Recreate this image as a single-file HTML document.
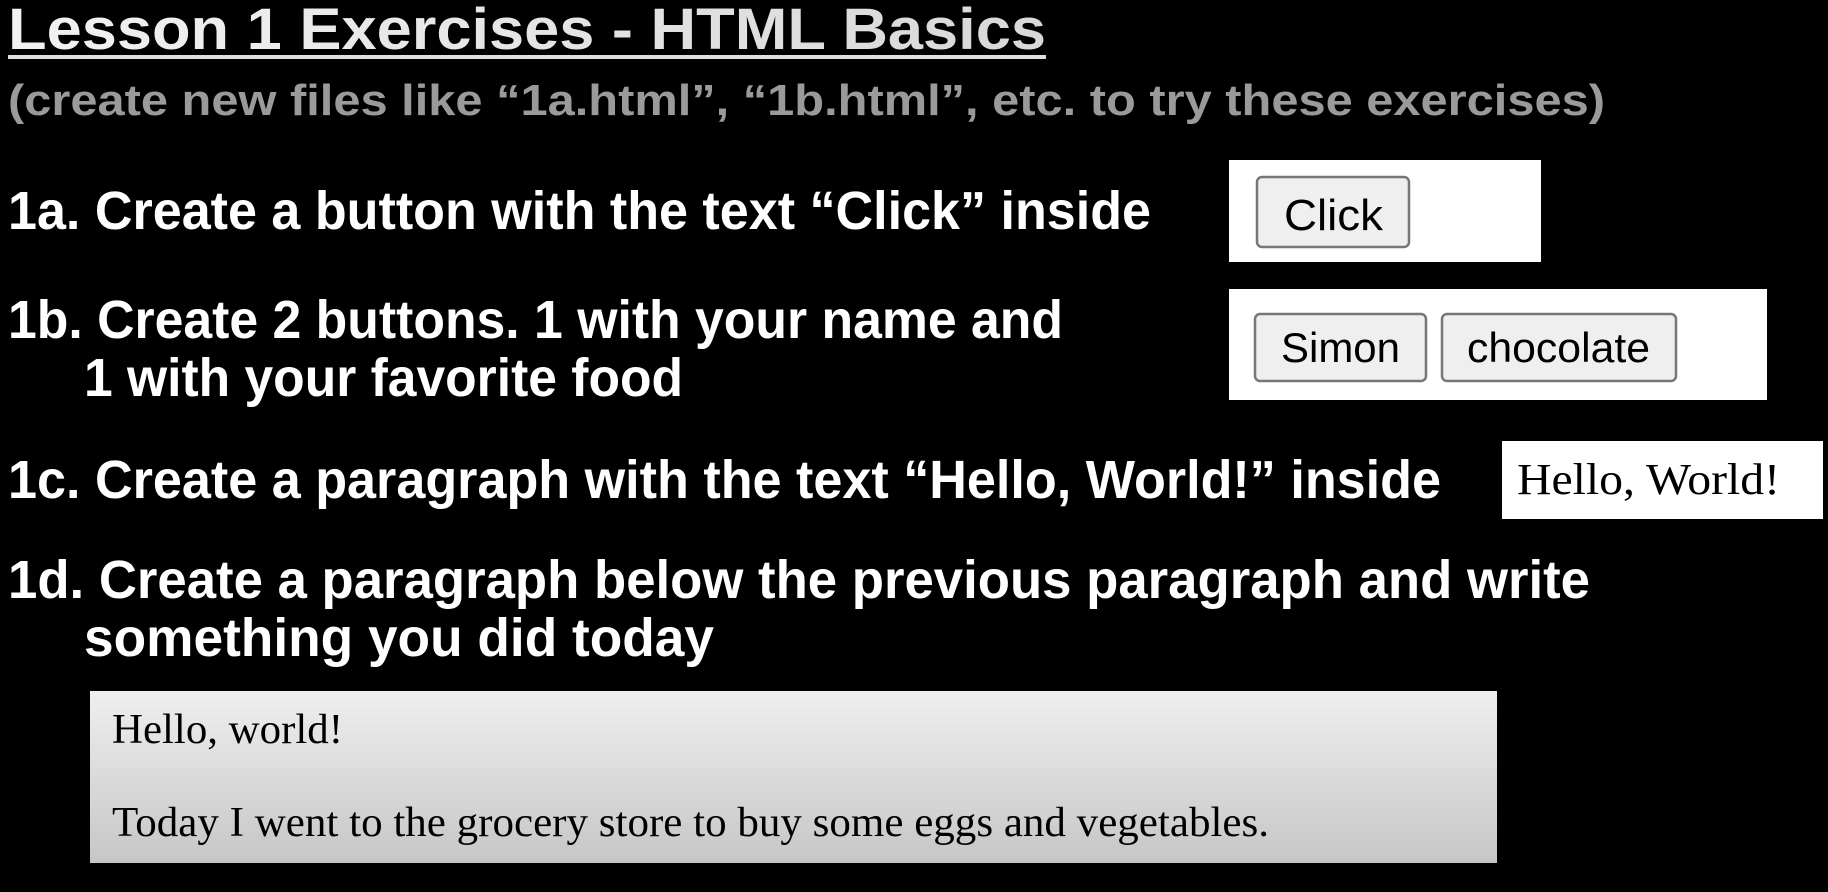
<!DOCTYPE html>
<html><head><meta charset="utf-8"><style>
html,body{margin:0;padding:0;background:#000;width:1828px;height:892px;overflow:hidden}
svg{display:block}
.m{font-family:"Liberation Sans",sans-serif;font-weight:bold;fill:#fff}
.s{font-family:"Liberation Serif",serif;fill:#000}
.b{font-family:"Liberation Sans",sans-serif;fill:#000}
</style></head><body>
<svg width="1828" height="892" viewBox="0 0 1828 892" xmlns="http://www.w3.org/2000/svg">
<defs><linearGradient id="g" x1="0" y1="0" x2="0" y2="1"><stop offset="0" stop-color="#efefef"/><stop offset="1" stop-color="#c6c6c6"/></linearGradient>
<linearGradient id="t" x1="0" y1="0" x2="1" y2="0"><stop offset="0" stop-color="#f2f2f2"/><stop offset="1" stop-color="#d8d8d8"/></linearGradient></defs>
<rect width="1828" height="892" fill="#000"/>
<text class="m" x="8" y="49" font-size="58" textLength="1038" lengthAdjust="spacingAndGlyphs" style="fill:url(#t)">Lesson 1  Exercises - HTML Basics</text>
<rect x="8" y="55" width="1038" height="4" fill="#e0e0e0"/>
<text class="m" x="8" y="115" font-size="44" textLength="1597" lengthAdjust="spacingAndGlyphs" style="fill:#9a9a9a">(create new files like “1a.html”, “1b.html”, etc. to try these exercises)</text>

<text class="m" x="8" y="229" font-size="54" textLength="1143" lengthAdjust="spacingAndGlyphs">1a. Create a button with the text “Click” inside</text>
<rect x="1229" y="160" width="312" height="102" fill="#fff"/>
<rect x="1257" y="177" width="152" height="70" rx="5" fill="#efefef" stroke="#777" stroke-width="2.5"/>
<text class="b" x="1284" y="230" font-size="44" textLength="99" lengthAdjust="spacingAndGlyphs">Click</text>

<text class="m" x="8" y="338" font-size="54" textLength="1055" lengthAdjust="spacingAndGlyphs">1b. Create 2 buttons. 1 with your name and</text>
<text class="m" x="84" y="396" font-size="54" textLength="599" lengthAdjust="spacingAndGlyphs">1 with your favorite food</text>
<rect x="1229" y="289" width="538" height="111" fill="#fff"/>
<rect x="1255" y="314" width="171" height="67" rx="5" fill="#efefef" stroke="#777" stroke-width="2.5"/>
<rect x="1442" y="314" width="234" height="67" rx="5" fill="#efefef" stroke="#777" stroke-width="2.5"/>
<text class="b" x="1281" y="362" font-size="42" textLength="119" lengthAdjust="spacingAndGlyphs">Simon</text>
<text class="b" x="1467" y="362" font-size="42" textLength="183" lengthAdjust="spacingAndGlyphs">chocolate</text>

<text class="m" x="8" y="498" font-size="54" textLength="1433" lengthAdjust="spacingAndGlyphs">1c. Create a paragraph with the text “Hello, World!” inside</text>
<rect x="1502" y="441" width="321" height="78" fill="#fff"/>
<text class="s" x="1517" y="494" font-size="44" textLength="263" lengthAdjust="spacingAndGlyphs">Hello, World!</text>

<text class="m" x="8" y="598" font-size="54" textLength="1582" lengthAdjust="spacingAndGlyphs">1d. Create a paragraph below the previous paragraph and write</text>
<text class="m" x="84" y="656" font-size="54" textLength="630" lengthAdjust="spacingAndGlyphs">something you did today</text>

<rect x="90" y="691" width="1407" height="172" fill="url(#g)"/>
<text class="s" x="112" y="743" font-size="42" textLength="231" lengthAdjust="spacingAndGlyphs">Hello, world!</text>
<text class="s" x="112" y="836" font-size="42" textLength="1157" lengthAdjust="spacingAndGlyphs">Today I went to the grocery store to buy some eggs and vegetables.</text>
</svg>
</body></html>
